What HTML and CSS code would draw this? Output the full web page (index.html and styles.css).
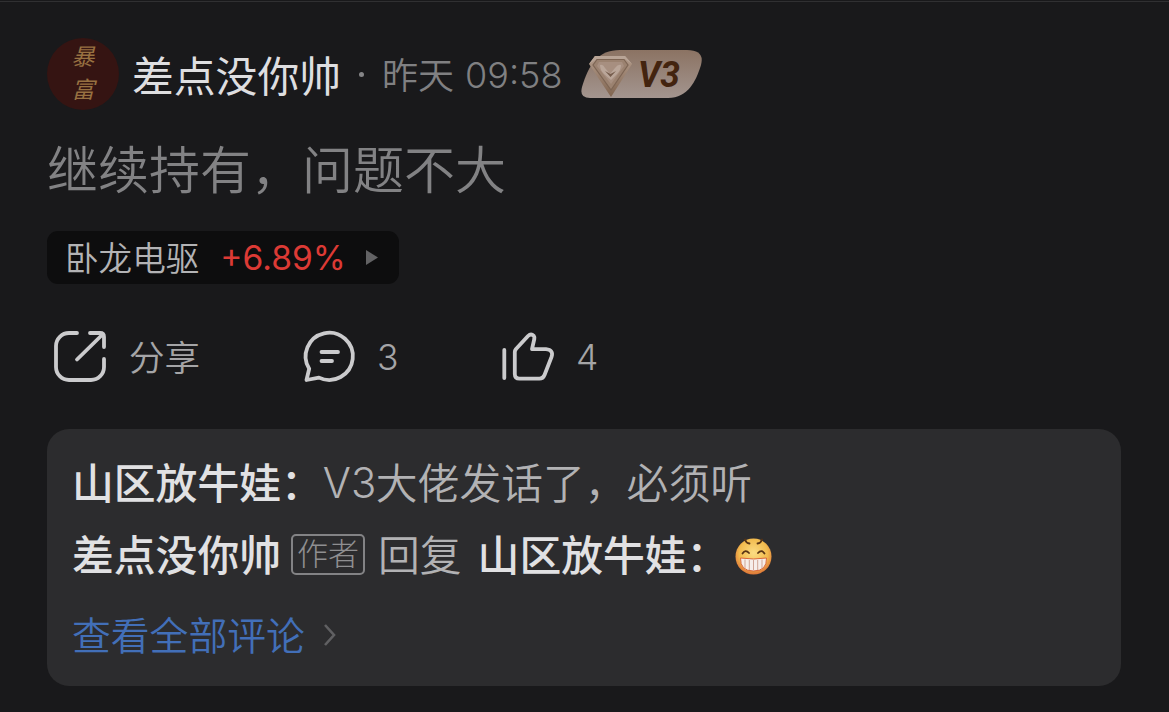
FILE: index.html
```html
<!DOCTYPE html>
<html lang="zh-CN">
<head>
    <meta charset="UTF-8">
    <meta name="viewport" content="width=device-width, initial-scale=1.0">
    <title>评论</title>
    <link rel="stylesheet" href="styles.css">
</head>
<body>
    <article class="post">
        <header class="post-header">
            <div class="avatar"><span>暴</span><span>富</span></div>
            <span class="author">差点没你帅</span>
            <span class="dot"></span>
            <span class="date">昨天</span>
            <span class="time">09:58</span>
            <svg class="badge" viewBox="0 0 122 48" width="122" height="48">
                <defs>
                    <linearGradient id="badgeBg" x1="0" y1="0" x2="0" y2="1">
                        <stop offset="0" stop-color="#8b7363"/>
                        <stop offset="1" stop-color="#a3958f"/>
                    </linearGradient>
                    <linearGradient id="gem" x1="0" y1="0" x2="0" y2="1">
                        <stop offset="0" stop-color="#b39c8c"/>
                        <stop offset="1" stop-color="#80644f"/>
                    </linearGradient>
                </defs>
                <path d="M39 0H106Q124 0 120 15C115 31 107 48 87 48H9Q-2 48 1 37C8 14 17 0 39 0Z" fill="url(#badgeBg)"/>
                <path d="M14 6H44L51 14L30 47L8 14Z" fill="url(#gem)"/>
                <path d="M14 6H44L51 14L44 9H16L8 14Z" fill="#b8a496"/>
                <path d="M16 9.5H43L47 15L30 40L12 15Z" fill="#9b8270" stroke="#7d6554" stroke-width="1.2"/>
                <path d="M18 12H41L43 16L30 34L16 16Z" fill="#a78f80"/>
                <path d="M19 15Q22 14 24 18L29 24L34 18Q37 14 40 15Q40 20 36 24L30 30L23 24Q19 20 19 15Z" fill="#baa699"/>
                <path d="M24 21L29.5 27L35 21L29.5 24Z" fill="#765d4d"/>
                <text class="badge-text" x="57" y="37" textLength="42" lengthAdjust="spacingAndGlyphs">V3</text>
            </svg>
        </header>

        <p class="content">继续持有，问题不大</p>

        <div class="stock">
            <span class="stock-name">卧龙电驱</span>
            <span class="stock-change">+6.89%</span>
            <svg class="stock-arrow" viewBox="0 0 12 15" width="12" height="15"><path d="M0 0L12 7.5L0 15Z"/></svg>
        </div>

        <div class="actions">
            <div class="action share">
                <svg class="icon" viewBox="50 326 60 60">
                    <path d="M77 333H69A13 13 0 0 0 56 346V367A13 13 0 0 0 69 380H91A13 13 0 0 0 104 367V359"/>
                    <path d="M90 333H100Q104 333 104 337V347M103 334L77 359.5"/>
                </svg>
                <span class="label">分享</span>
            </div>
            <div class="action reply">
                <svg class="icon" viewBox="299 326 60 60">
                    <path d="M309.2 368.8A23.6 23.6 0 1 1 319 377.6L306.5 380Z"/>
                    <path d="M321.5 352H338M321.5 361H332"/>
                </svg>
                <span class="count">3</span>
            </div>
            <div class="action like">
                <svg class="icon" viewBox="498 326 60 60">
                    <path d="M504.3 350V378"/>
                    <path d="M516 349L528 336Q531 333 533.8 335.8Q534.7 337 534.3 339L532 349.2H546Q554 350 551.5 357L544.5 375Q543 378.7 539.5 378.7H519.5Q514.8 378.7 514.8 374V352Q514.8 350.5 516 349Z"/>
                </svg>
                <span class="count">4</span>
            </div>
        </div>

        <section class="comments">
            <div class="comment">
                <span class="user">山区放牛娃：</span><span class="latin">V3</span><span>大佬发话了，必须听</span>
            </div>
            <div class="comment">
                <span class="user">差点没你帅</span>
                <span class="tag">作者</span>
                <span class="verb">回复</span>
                <span class="user">山区放牛娃：</span>
                <svg class="emoji" viewBox="0 0 37 37" width="37" height="37">
                    <defs>
                        <radialGradient id="face" cx=".5" cy=".4" r=".6">
                            <stop offset="0" stop-color="#fbdc83"/>
                            <stop offset=".65" stop-color="#f2bb4e"/>
                            <stop offset="1" stop-color="#dd7537"/>
                        </radialGradient>
                    </defs>
                    <circle cx="18.5" cy="18.5" r="18" fill="url(#face)"/>
                    <path d="M10 1.5Q11 5 14.5 5.5M27 1.5Q26 5 22.5 5.5" class="brow"/>
                    <path d="M7.5 15.5Q10.5 11 14 15M23 15Q26.5 11 29.5 15.5" class="brow"/>
                    <path d="M5.5 20Q18.5 22 31.5 20Q32 33 18.5 33Q5 33 5.5 20Z" fill="#f6eeea" stroke="#d9683c"/>
                    <path d="M10 21.5V30M14.3 22V32M18.5 22V32.5M22.7 22V32M27 21.5V30" stroke="#cfa596" stroke-width="1"/>
                </svg>
            </div>
            <a class="more">
                <span>查看全部评论</span>
                <svg viewBox="0 0 14 24" width="14" height="24"><path d="M2 2L11 12L2 22"/></svg>
            </a>
        </section>
    </article>
</body>
</html>
```

FILE: styles.css
```css
* {
    box-sizing: border-box;
}
body {
    margin: 0;
    height: 712px;
    overflow: hidden;
    background-color: #19191b;
    font-family: Inter, "Noto Sans CJK SC", sans-serif;
    white-space: nowrap;
}
.post {
    margin-top: 1px;
    border-top: 1px solid #303032;
    padding: 36px 48px 0 47px;
}
.post-header {
    display: flex;
    align-items: center;
    height: 72px;
}
.avatar {
    display: flex;
    flex-direction: column;
    align-items: center;
    justify-content: center;
    gap: 8px;
    width: 72px;
    height: 72px;
    border-radius: 50%;
    background-color: #351412;
    color: #987141;
    font-size: 23px;
    font-style: italic;
    font-weight: 400;
    line-height: 25px;
}
.author {
    margin-left: 13px;
    padding-bottom: 1px;
    color: #dedee0;
    font-size: 41.8px;
}
.dot {
    width: 5px;
    height: 5px;
    margin-left: 18px;
    border-radius: 50%;
    background-color: #858587;
}
.date,
.time {
    color: #808082;
    font-size: 36px;
}
.date {
    margin-left: 18px;
    padding-bottom: 3px;
    font-weight: 350;
}
.time {
    width: 96px;
    margin-left: 11px;
    padding-top: 1px;
    font-weight: 320;
}
.badge {
    margin-left: 20px;
}
.badge-text {
    fill: #43240f;
    font-family: Roboto, sans-serif;
    font-size: 36px;
    font-style: italic;
    font-weight: 700;
}
.content {
    height: 76px;
    margin: 23px 0 0;
    color: #828284;
    font-size: 51px;
    font-weight: 350;
    line-height: 76px;
}
.stock {
    display: flex;
    align-items: center;
    width: 352px;
    height: 53px;
    margin-top: 22px;
    padding-left: 18px;
    border-radius: 11px;
    background-color: #0d0d0e;
    font-size: 33.6px;
}
.stock-name {
    padding-bottom: 3px;
    color: #b3b3b5;
    font-weight: 350;
}
.stock-change {
    width: 122px;
    margin-left: 21px;
    color: #dc3a35;
}
.stock-arrow {
    margin-left: 24px;
    fill: #626264;
}
.actions {
    display: flex;
    height: 60px;
    margin: 42px 0 0 3px;
    color: #a5a5a7;
    font-size: 35.5px;
}
.action {
    display: flex;
    align-items: center;
    gap: 18px;
}
.share {
    gap: 19px;
    width: 249px;
}
.reply {
    width: 199px;
}
.label {
    padding-bottom: 2px;
    font-weight: 350;
}
.count {
    padding-top: 2px;
    font-weight: 300;
}
.icon {
    width: 60px;
    height: 60px;
    fill: none;
    stroke: #cbcbcd;
    stroke-width: 3.8;
    stroke-linecap: round;
    stroke-linejoin: round;
}
.comments {
    height: 257px;
    margin-top: 43px;
    padding: 16px 25px 0;
    border-radius: 22px;
    background-color: #2c2c2e;
    color: #b2b2b4;
    font-size: 41.8px;
    font-weight: 350;
}
.comment {
    display: flex;
    align-items: center;
    height: 72px;
}
.user {
    color: #e1e1e3;
    font-weight: 500;
}
.latin {
    width: 53px;
    padding-top: 3px;
    font-weight: 300;
}
.tag {
    width: 74px;
    height: 41px;
    margin: 2px 0 0 10px;
    border: 2px solid #838385;
    border-radius: 5px;
    color: #8f8f91;
    font-size: 31px;
    font-weight: 300;
    line-height: 36px;
    text-align: center;
}
.verb {
    margin: 0 16px 0 13px;
}
.emoji {
    margin: 6px 0 0 7px;
}
.brow {
    fill: none;
    stroke: #593515;
    stroke-width: 1.8;
    stroke-linecap: round;
}
.more {
    display: flex;
    align-items: center;
    gap: 18px;
    height: 56px;
    margin-top: 16px;
    color: #426fb8;
    font-size: 38.8px;
}
.more svg {
    margin-top: 3px;
    fill: none;
    stroke: #606062;
    stroke-width: 2.6;
}
```
